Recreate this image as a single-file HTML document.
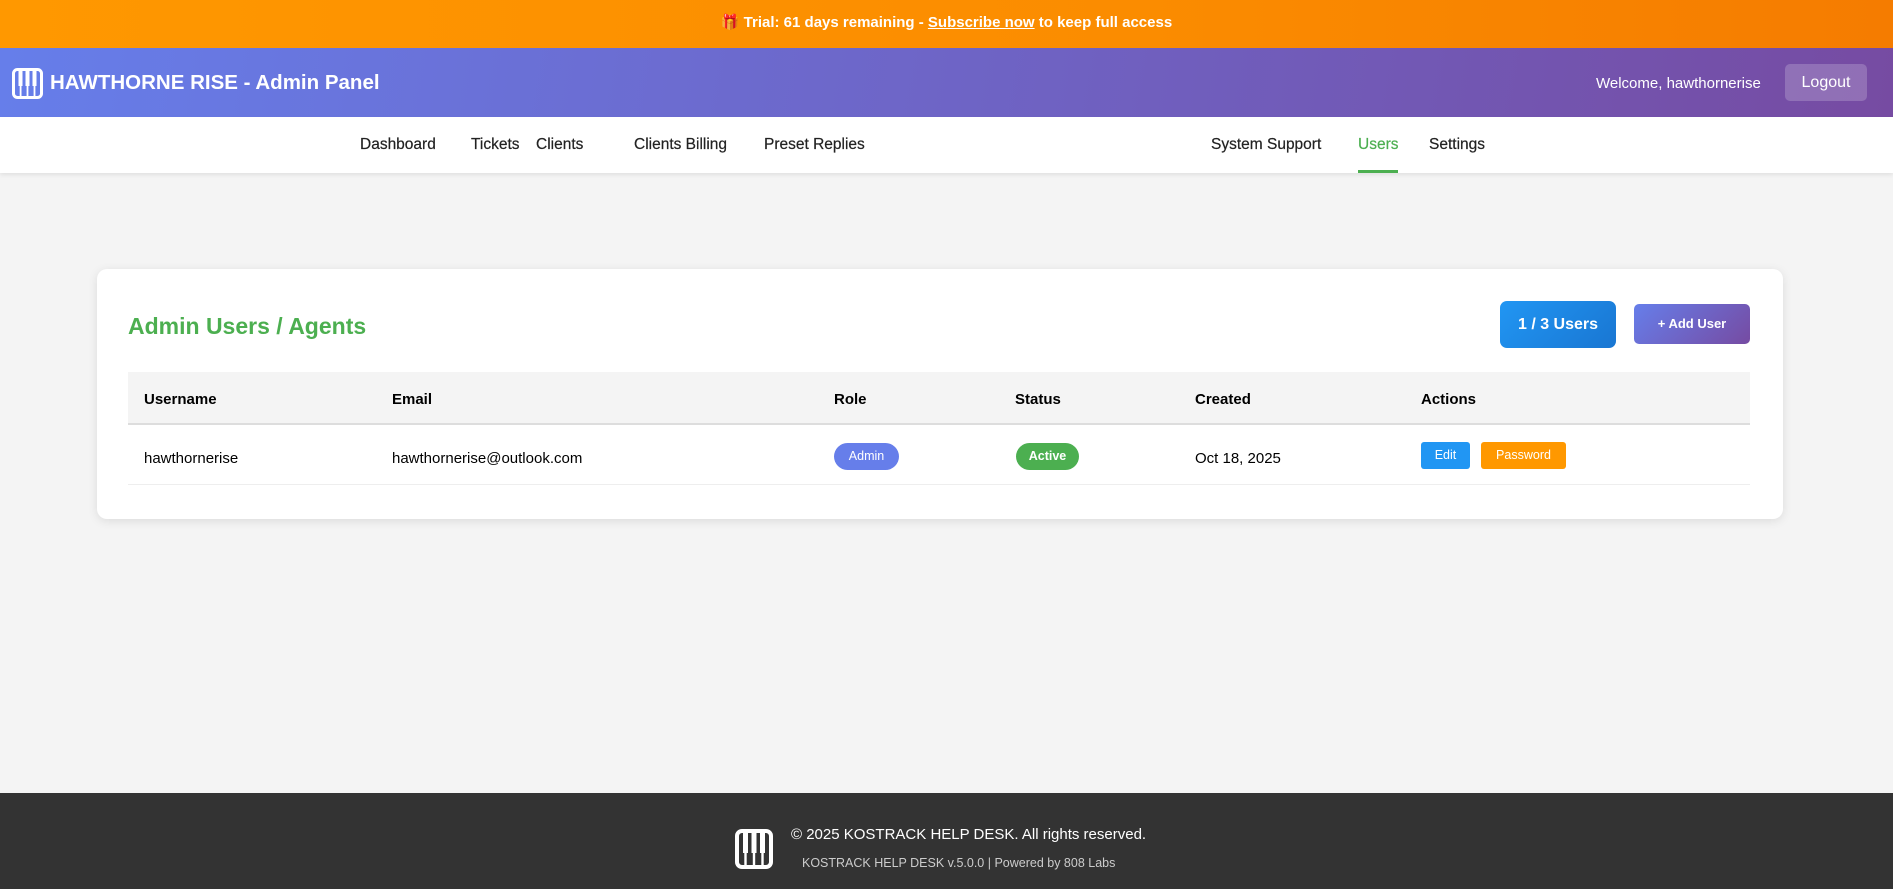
<!DOCTYPE html>
<html><head><meta charset="utf-8"><style>
*{box-sizing:border-box;margin:0;padding:0}
body{width:1893px;height:889px;overflow:hidden;background:#f4f4f4;font-family:"Liberation Sans",sans-serif;position:relative}
.trial{position:absolute;top:0;left:0;width:1893px;height:48px;background:linear-gradient(90deg,#ff9800,#fb8c00 60%,#f57c00);color:#fff;font-weight:bold;font-size:15px;text-align:center;line-height:46px}
.trial u{color:#fff}
.hdr{position:absolute;top:48px;left:0;width:1893px;height:69px;background:linear-gradient(100deg,#667eea,#764ba2)}
.hdr .title{position:absolute;left:50px;top:23px;color:#fff;font-weight:bold;font-size:20.5px}
.hdr .wel{position:absolute;left:1596px;top:27px;color:#fff;font-size:15px}
.hdr .lo{position:absolute;left:1785px;top:16px;width:82px;height:37px;background:rgba(255,255,255,.2);border-radius:5px;color:#fff;font-size:16px;text-align:center;line-height:37px}
.nav{position:absolute;top:117px;left:0;width:1893px;height:56px;background:#fff;box-shadow:0 2px 4px rgba(0,0,0,.08)}
.nav span{position:absolute;top:19px;font-size:15.5px;color:#222;-webkit-text-stroke:0.2px #222}
.nav .act{color:#4caf50;-webkit-text-stroke:0.2px #4caf50}
.nav .ul{position:absolute;left:1358px;top:53px;width:40px;height:3px;background:#4caf50}
.card{position:absolute;left:97px;top:269px;width:1686px;height:250px;background:#fff;border-radius:10px;box-shadow:0 2px 10px rgba(0,0,0,.1)}
.h2{position:absolute;left:31px;top:44px;color:#4caf50;font-weight:bold;font-size:23px}
.cnt{position:absolute;left:1403px;top:32px;width:116px;height:47px;border-radius:7px;background:linear-gradient(135deg,#2196f3,#1976d2);color:#fff;font-weight:bold;font-size:16px;text-align:center;line-height:47px}
.add{position:absolute;left:1537px;top:35px;width:116px;height:40px;border-radius:5px;background:linear-gradient(135deg,#667eea,#764ba2);color:#fff;font-weight:bold;font-size:13px;text-align:center;line-height:40px}
.th{position:absolute;left:31px;top:103px;width:1622px;height:53px;background:#f4f4f4;border-bottom:2px solid #ddd}
.th span{position:absolute;top:19px;font-weight:bold;font-size:15px;color:#000}
.tr{position:absolute;left:31px;top:156px;width:1622px;height:60px;border-bottom:1px solid #eee}
.tr span{position:absolute;top:25px;font-size:15px;color:#000}
.pill{position:absolute!important;top:18px!important;height:27px;border-radius:14px;color:#fff!important;font-size:12.5px!important;text-align:center;line-height:27px}
.btn{position:absolute!important;top:17px!important;height:27px;border-radius:3px;color:#fff!important;font-size:12.5px!important;text-align:center;line-height:27px}
.foot{position:absolute;top:793px;left:0;width:1893px;height:96px;background:#333}
.f1{position:absolute;left:791px;top:33px;color:#fff;font-size:15px}
.f2{position:absolute;left:802px;top:63px;color:#ccc;font-size:12.5px}
</style></head><body>
<div class="trial">🎁 Trial: 61 days remaining - <u>Subscribe now</u> to keep full access</div>
<div class="hdr">
<svg style="position:absolute;left:12px;top:20px" width="31" height="31" viewBox="0 0 31 31"><rect x="1.5" y="1.5" width="28" height="28" rx="4" fill="none" stroke="#fff" stroke-width="3"/><rect x="6.5" y="3" width="4" height="15" fill="#fff"/><rect x="13.5" y="3" width="4" height="15" fill="#fff"/><rect x="20.5" y="3" width="4" height="15" fill="#fff"/><rect x="7.7" y="17" width="1.8" height="11" fill="#fff"/><rect x="14.6" y="17" width="1.8" height="11" fill="#fff"/><rect x="21.6" y="17" width="1.8" height="11" fill="#fff"/></svg>
<div class="title">HAWTHORNE RISE - Admin Panel</div>
<div class="wel">Welcome, hawthornerise</div>
<div class="lo">Logout</div>
</div>
<div class="nav">
<span style="left:360px">Dashboard</span><span style="left:471px">Tickets</span><span style="left:536px">Clients</span><span style="left:634px">Clients Billing</span><span style="left:764px">Preset Replies</span>
<span style="left:1211px">System Support</span><span class="act" style="left:1358px">Users</span><span style="left:1429px">Settings</span>
<div class="ul"></div>
</div>
<div class="card">
<div class="h2">Admin Users / Agents</div>
<div class="cnt">1 / 3 Users</div>
<div class="add">+ Add User</div>
<div class="th"><span style="left:16px">Username</span><span style="left:264px">Email</span><span style="left:706px">Role</span><span style="left:887px">Status</span><span style="left:1067px">Created</span><span style="left:1293px">Actions</span></div>
<div class="tr"><span style="left:16px">hawthornerise</span><span style="left:264px">hawthornerise@outlook.com</span>
<span class="pill" style="left:706px;width:65px;background:#667eea">Admin</span>
<span class="pill" style="left:888px;width:63px;background:#4caf50;font-weight:bold">Active</span>
<span style="left:1067px">Oct 18, 2025</span>
<span class="btn" style="left:1293px;width:49px;background:#2196f3">Edit</span>
<span class="btn" style="left:1353px;width:85px;background:#ff9800">Password</span>
</div>
</div>
<div class="foot">
<svg style="position:absolute;left:735px;top:36px" width="38" height="40" viewBox="0 0 38 40"><rect x="2" y="2" width="34" height="36" rx="5" fill="none" stroke="#fff" stroke-width="4"/><rect x="8" y="4" width="5" height="20" fill="#fff"/><rect x="16.5" y="4" width="5" height="20" fill="#fff"/><rect x="25" y="4" width="5" height="20" fill="#fff"/><rect x="9.3" y="22" width="2.4" height="14" fill="#fff"/><rect x="17.8" y="22" width="2.4" height="14" fill="#fff"/><rect x="26.3" y="22" width="2.4" height="14" fill="#fff"/></svg>
<div class="f1">© 2025 KOSTRACK HELP DESK. All rights reserved.</div>
<div class="f2">KOSTRACK HELP DESK v.5.0.0 | Powered by 808 Labs</div>
</div>
</body></html>
